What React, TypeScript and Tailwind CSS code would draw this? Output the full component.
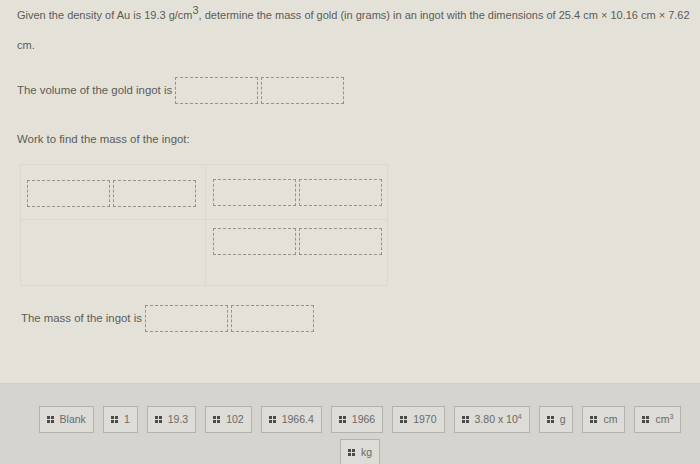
import React from "react";

function Box() {
  return <div className="w-[83px] h-[27px] border-[1.5px] border-dashed border-[#94938e]" />;
}

function BoxPair() {
  return (
    <div className="flex gap-[3px]">
      <Box />
      <Box />
    </div>
  );
}

function Handle() {
  return (
    <svg width="7" height="7" viewBox="0 0 7 7" className="shrink-0">
      <rect x="0" y="0" width="3" height="3" fill="#4a4a48" />
      <rect x="4" y="0" width="3" height="3" fill="#4a4a48" />
      <rect x="0" y="4" width="3" height="3" fill="#4a4a48" />
      <rect x="4" y="4" width="3" height="3" fill="#4a4a48" />
    </svg>
  );
}

function Tile({ children }: { children: React.ReactNode }) {
  return (
    <div className="h-[27px] flex items-center gap-[6px] px-[7px] border border-[#b3b2ac] bg-[#dddcd6] text-[10.5px] text-[#6a6a68] whitespace-nowrap">
      <Handle />
      <span>{children}</span>
    </div>
  );
}

export default function App() {
  return (
    <div
      className="w-[700px] h-[464px] overflow-hidden bg-[#e4e2d8] flex flex-col text-[#5b5b58]"
      style={{ fontFamily: '"Liberation Sans", Arial, sans-serif' }}
    >
      <p className="pl-[17px] text-[11px] leading-[30px] whitespace-nowrap">
        Given the density of Au is 19.3 g/cm
        <sup className="text-[11px]">3</sup>, determine the mass of gold (in grams) in an ingot with the dimensions of
        25.4 cm × 10.16 cm × 7.62
        <br />
        cm.
      </p>

      <div className="mt-[17px] ml-[17px] flex items-center gap-[3px] text-[11.4px]">
        <span>The volume of the gold ingot is</span>
        <BoxPair />
      </div>

      <div className="mt-[28px] ml-[17px] text-[11.4px] leading-[14px]">Work to find the mass of the ingot:</div>

      <div className="mt-[18px] ml-[20px] w-[368px] grid grid-cols-[185px_183px] grid-rows-[55px_65px] border border-[#dbd9ce]">
        <div className="border-r border-b border-[#dbd9ce] flex items-center pl-[6px] pt-[2px]">
          <BoxPair />
        </div>
        <div className="border-b border-[#dbd9ce] flex items-center pl-[7px]">
          <BoxPair />
        </div>
        <div className="border-r border-[#dbd9ce]" />
        <div className="pt-[8px] pl-[7px]">
          <BoxPair />
        </div>
      </div>

      <div className="mt-[19px] ml-[21px] flex items-center gap-[3px] text-[11.4px]">
        <span>The mass of the ingot is</span>
        <BoxPair />
      </div>

      <div className="mt-[51px] flex-1 bg-[#d5d4ce] border-t border-[#cfcec7] pt-[22px] flex flex-wrap justify-center content-start gap-x-[9px] gap-y-[6px] pl-[30px] pr-[10px]">
        <Tile>Blank</Tile>
        <Tile>1</Tile>
        <Tile>19.3</Tile>
        <Tile>102</Tile>
        <Tile>1966.4</Tile>
        <Tile>1966</Tile>
        <Tile>1970</Tile>
        <Tile>
          3.80 x 10<sup className="text-[7px]">4</sup>
        </Tile>
        <Tile>g</Tile>
        <Tile>cm</Tile>
        <Tile>
          cm<sup className="text-[7px]">3</sup>
        </Tile>
        <Tile>kg</Tile>
      </div>
    </div>
  );
}
